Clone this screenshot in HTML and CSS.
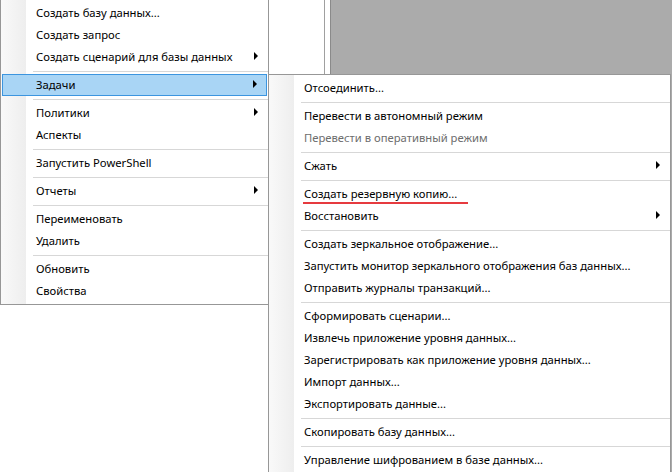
FILE: index.html
```html
<!DOCTYPE html>
<html lang="ru">
<head>
    <meta charset="UTF-8">
    <meta name="viewport" content="width=device-width, initial-scale=1.0">
    <title>Контекстное меню базы данных</title>
    <link rel="stylesheet" href="styles.css">
</head>
<body>
    <!-- Окно под меню -->
    <div class="workspace">
        <div class="explorer"></div>
        <div class="splitter"></div>
        <div class="document"></div>
    </div>

    <!-- Контекстное меню -->
    <ul class="menu menu-main">
        <li class="item">Создать базу данных...</li>
        <li class="item">Создать запрос</li>
        <li class="item has-sub">Создать сценарий для базы данных<i class="arrow"></i></li>
        <li class="sep"></li>
        <li class="item has-sub active">Задачи<i class="arrow"></i></li>
        <li class="sep"></li>
        <li class="item has-sub">Политики<i class="arrow"></i></li>
        <li class="item">Аспекты</li>
        <li class="sep"></li>
        <li class="item">Запустить PowerShell</li>
        <li class="sep"></li>
        <li class="item has-sub">Отчеты<i class="arrow"></i></li>
        <li class="sep"></li>
        <li class="item">Переименовать</li>
        <li class="item">Удалить</li>
        <li class="sep"></li>
        <li class="item">Обновить</li>
        <li class="item">Свойства</li>
    </ul>

    <!-- Подменю "Задачи" -->
    <ul class="menu menu-sub">
        <li class="item">Отсоединить...</li>
        <li class="sep"></li>
        <li class="item">Перевести в автономный режим</li>
        <li class="item disabled">Перевести в оперативный режим</li>
        <li class="sep"></li>
        <li class="item has-sub">Сжать<i class="arrow"></i></li>
        <li class="sep"></li>
        <li class="item marked">Создать резервную копию...</li>
        <li class="item has-sub">Восстановить<i class="arrow"></i></li>
        <li class="sep"></li>
        <li class="item">Создать зеркальное отображение...</li>
        <li class="item">Запустить монитор зеркального отображения баз данных...</li>
        <li class="item">Отправить журналы транзакций...</li>
        <li class="sep"></li>
        <li class="item">Сформировать сценарии...</li>
        <li class="item">Извлечь приложение уровня данных...</li>
        <li class="item">Зарегистрировать как приложение уровня данных...</li>
        <li class="item">Импорт данных...</li>
        <li class="item">Экспортировать данные...</li>
        <li class="sep"></li>
        <li class="item">Скопировать базу данных...</li>
        <li class="sep"></li>
        <li class="item">Управление шифрованием в базе данных...</li>
    </ul>
</body>
</html>
```

FILE: styles.css
```css
/* базовые стили */
* {
    box-sizing: border-box;
}

html, body {
    margin: 0;
    height: 100%;
    overflow: hidden;
}

body {
    position: relative;
    font-family: "Noto Sans", "Open Sans", sans-serif;
    font-size: 11.25px;
    color: #000;
    background: #fff;
}

/* окно за меню */
.workspace {
    display: flex;
    height: 100%;
}

.explorer {
    width: 325px;
    border-right: 1px solid #a0a0a0;
}

.splitter {
    width: 6px;
    border-right: 1px solid #8a8a8a;
}

.document {
    flex: 1;
    background: #ababab;
}

/* меню */
.menu {
    position: absolute;
    margin: 0;
    padding: 2px 0;
    list-style: none;
    border: 1px solid #979797;
    background-color: #fff;
    background-image: linear-gradient(to right, #f9f9f9, #eeeeee);
    background-size: 25px 100%;
    background-repeat: no-repeat;
}

.menu-main {
    left: 0;
    top: -1px;
    width: 269px;
}

.menu-sub {
    left: 268px;
    top: 74px;
    width: 403px;
    z-index: 1;
}

.item {
    position: relative;
    display: flex;
    align-items: center;
    height: 22px;
    padding: 0 0 2px 35px;
    white-space: nowrap;
}

.item.active {
    margin: 0 1px;
    padding-left: 33px;
    background: #a9d5f5;
    border: 1px solid #3c95df;
}

.item.disabled {
    color: #6d6d6d;
}

.sep {
    height: 1px;
    margin: 3px 0 2px 32px;
    background: #d7d7d7;
}

.arrow {
    margin-left: auto;
    margin-right: 10px;
    border-left: 4px solid #000;
    border-top: 4px solid transparent;
    border-bottom: 4px solid transparent;
}

.item.active .arrow {
    margin-right: 9px;
}

/* пометка красной линией */
.marked::after {
    content: "";
    position: absolute;
    left: 34px;
    bottom: 1px;
    width: 165px;
    height: 2px;
    background: #e63a3f;
}
```
